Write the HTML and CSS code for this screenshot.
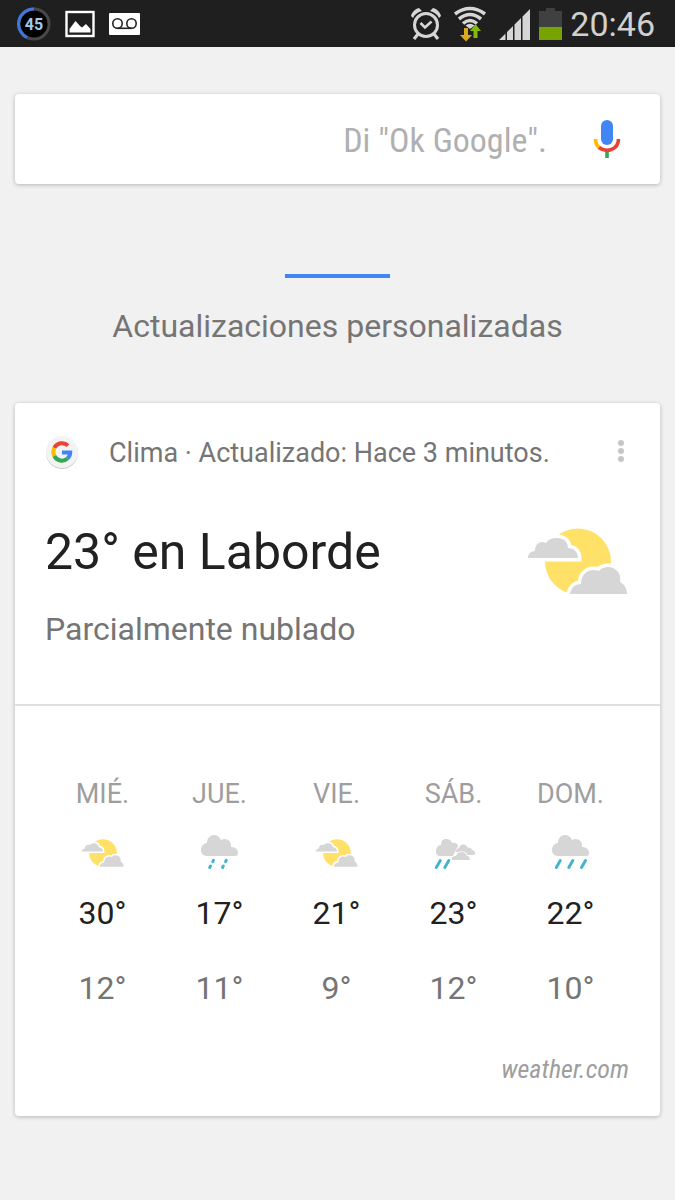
FILE: index.html
```html
<!DOCTYPE html>
<html lang="es">
<head>
    <meta charset="UTF-8">
    <meta name="viewport" content="width=device-width, initial-scale=1.0">
    <title>Google Now</title>
    <link rel="stylesheet" href="styles.css">
</head>
<body>
    <!-- Shared weather icons -->
    <svg class="hidden" aria-hidden="true">
        <symbol id="partly-cloudy" viewBox="0 0 100 67">
            <circle cx="50" cy="33.5" r="33" fill="#ffe168"/>
            <g fill="#d6d6d6" stroke="#fff" stroke-width="7" paint-order="stroke">
                <path d="M0 30C0 26 3 23 7 23C7 16 12 12 18 15C20 11 25 10 29 10C36 10 40 14 40 20C46 20 50 24 50 30Z"/>
                <path d="M42 66C43 60 47 56 53 56C53 47 59 42 65 42C67 42 69 42 71 43C73 40 77 39 80 39C88 39 94 46 92 54C96 56 99 60 99 66Z"/>
            </g>
        </symbol>
        <symbol id="cloud" viewBox="0 0 42 36">
            <path fill="#d6d6d6" d="M8 22C4 22 2 19 2 16C2 12 5 9 8 9C8 4 11 1 15 1C18 1 21 3 22 6C27 3 33 7 32 13C36 13 39 15 39 19C39 21 38 22 37 22Z"/>
        </symbol>
        <symbol id="drizzle" viewBox="0 0 42 36">
            <use href="#cloud" width="42" height="36"/>
            <g stroke="#46b5cb" stroke-width="3" stroke-linecap="round">
                <path d="M14.5 26.3l-.7 1.3M11.5 32l-.8 1.5M27.3 26.3l-.7 1.3M24.3 32l-.8 1.5"/>
            </g>
        </symbol>
        <symbol id="rain" viewBox="0 0 42 36">
            <use href="#cloud" width="42" height="36"/>
            <path stroke="#46b5cb" stroke-width="3" stroke-linecap="round" d="M10.3 26.5l-4 7M22.8 26.5l-4 7M35.5 26.5l-4 7"/>
        </symbol>
        <symbol id="showers" viewBox="0 0 42 36">
            <path fill="#d6d6d6" d="M7 22C4 22 3 20 3 17C3 14 5 11 8 11C8 7 10 5 13 5C16 5 18 6 19 9C22 8 25 10 25 12L20 22Z"/>
            <path fill="#d6d6d6" d="M23 18C23 15 25 14 26 14C27 11 29 10 31 10.5C33 11 34 12 35 14C37 13 39 15 39 16C41 16 42.500 18 42 19.5C42 21 41 21 40 21H32Z"/>
            <path fill="#d6d6d6" stroke="#fff" stroke-width="1.6" paint-order="stroke" d="M19 26C18 23 21 21.5 23 22C24 19 26 18 28.5 18C31 18 33 19 33.5 21.5C36 22 37 24 37 26Z"/>
            <path stroke="#46b5cb" stroke-width="3" stroke-linecap="round" d="M7.3 26.5l-4 7M15.8 26.5l-4 7"/>
        </symbol>
    </svg>

    <header class="status-bar">
        <div class="status-group">
            <svg width="34" height="34" viewBox="0 0 34 34" role="img" aria-label="45">
                <circle cx="17" cy="17" r="15" fill="#000" stroke="#484848" stroke-width="3"/>
                <path d="M10 30.5A15 15 0 0 1 17 2" fill="none" stroke="#3f78dc" stroke-width="3"/>
                <text class="level-text" x="17" y="23" text-anchor="middle">45</text>
            </svg>
            <svg width="30" height="28" viewBox="0 0 30 28" aria-hidden="true">
                <rect x="1.5" y="2" width="27" height="24" fill="none" stroke="#fff" stroke-width="2.4"/>
                <path d="M4.500 22.5V19L10.5 11L15 16L17 17.5L21 14L25.500 19V22.500Z" fill="#fff"/>
            </svg>
            <svg width="31" height="22" viewBox="0 0 31 22" aria-hidden="true">
                <rect width="31" height="22" rx="1" fill="#fff"/>
                <g fill="none" stroke="#222" stroke-width="1.6">
                    <circle cx="8.5" cy="10.5" r="4.7"/>
                    <circle cx="22.5" cy="10.5" r="4.7"/>
                    <path d="M8.5 15.3H22.5"/>
                </g>
            </svg>
        </div>
        <div class="status-group status-right">
            <div class="status-group connections">
                <svg width="30" height="34" viewBox="0 0 30 34" aria-hidden="true">
                    <g fill="none" stroke="#d6d6d6">
                        <circle cx="15" cy="18" r="11.5" stroke-width="3"/>
                        <path d="M9.5 16L14 20.5L20.5 14.5" stroke-width="2.6"/>
                        <path d="M7 27L3 32M23 27L27 32" stroke-width="3.2"/>
                    </g>
                    <path d="M0 9C1 5 4 2 8 1L11 4C7 5 4 7 2 11ZM30 9C29 5 26 2 22 1L19 4C23 5 26 7 28 11Z" fill="#d6d6d6"/>
                </svg>
                <svg width="34" height="36" viewBox="0 0 34 36" aria-hidden="true">
                    <g fill="none" stroke="#d6d6d6" stroke-width="3.6">
                        <path d="M2 8Q17-3 32 8"/>
                        <path d="M6 13Q17 4 28 13"/>
                        <path d="M10 17.5Q17 11.500 24 17.5"/>
                    </g>
                    <path d="M12.5 19.5Q17 16 21.5 19.5L17 23Z" fill="#d6d6d6"/>
                    <path d="M11 22H15V29H19L13 35.5L7 29H11Z" fill="#d9aa1c"/>
                    <path d="M22.5 18L28 25H24.5V32H20.500V25H17Z" fill="#86b812"/>
                </svg>
                <svg width="32" height="32" viewBox="0 0 32 32" aria-hidden="true">
                    <path d="M0 32L6.5 25.5V32ZM8 32V24L14 18V32ZM15.5 32V16.500L22 10V32ZM23.500 32V8.500L31 1V32Z" fill="#d6d6d6"/>
                </svg>
            </div>
            <svg width="23" height="34" viewBox="0 0 23 34" aria-hidden="true">
                <path d="M0 4H7V1H16V4H23V20H0Z" fill="#404040"/>
                <rect y="20" width="23" height="13" fill="#77a300"/>
            </svg>
            <time class="clock" datetime="20:46">20:46</time>
        </div>
    </header>

    <main class="feed">
        <form class="card search-card">
            <input type="text" class="search-input" placeholder='Di "Ok Google".' aria-label="Buscar">
            <button type="button" class="icon-button" aria-label="Búsqueda por voz">
                <svg width="28" height="38" viewBox="0 0 28 38">
                    <rect x="8" y="0" width="12" height="25" rx="6" fill="#4285f4"/>
                    <path d="M14 30V38" stroke="#34a853" stroke-width="3.6"/>
                    <path d="M2.5 19C2.5 23 4 26 6.5 28" fill="none" stroke="#fbbc05" stroke-width="3.6"/>
                    <path d="M6 27.5C13 33 25.5 30 25.5 19" fill="none" stroke="#ea4335" stroke-width="3.6"/>
                </svg>
            </button>
        </form>

        <div class="updates">
            <div class="updates-bar"></div>
            <h1>Actualizaciones personalizadas</h1>
        </div>

        <section class="card weather-card">
            <div class="card-header">
                <svg width="34" height="34" viewBox="0 0 34 34" aria-hidden="true">
                    <circle cx="17" cy="17" r="16" fill="#ccc"/>
                    <circle cx="17" cy="16" r="16" fill="#f3f3f3"/>
                    <g fill="none" stroke-width="4">
                        <path d="M23 9.7A8.5 8.5 0 0 0 9.3 12" stroke="#ea4335"/>
                        <path d="M9.3 12A8.5 8.5 0 0 0 9.3 20" stroke="#fbbc05"/>
                        <path d="M9.3 20A8.5 8.5 0 0 0 22.5 22.5" stroke="#34a853"/>
                        <path d="M22.5 22.5A8.5 8.5 0 0 0 25.2 16.5H17" stroke="#4285f4"/>
                    </g>
                </svg>
                <span class="card-source">Clima · Actualizado: Hace 3 minutos.</span>
                <button type="button" class="icon-button" aria-label="Más opciones">
                    <svg width="6" height="28" viewBox="0 0 6 28" fill="#c6c6c6">
                        <circle cx="3" cy="4" r="3"/>
                        <circle cx="3" cy="12" r="3"/>
                        <circle cx="3" cy="20" r="3"/>
                    </svg>
                </button>
            </div>

            <div class="current">
                <div>
                    <h2>23° en Laborde</h2>
                    <p>Parcialmente nublado</p>
                </div>
                <svg width="100" height="67"><use href="#partly-cloudy"/></svg>
            </div>

            <div class="forecast">
                <table>
                    <thead>
                        <tr>
                            <th scope="col">MIÉ.</th>
                            <th scope="col">JUE.</th>
                            <th scope="col">VIE.</th>
                            <th scope="col">SÁB.</th>
                            <th scope="col">DOM.</th>
                        </tr>
                    </thead>
                    <tbody>
                        <tr class="icons">
                            <td><svg width="42" height="36"><use href="#partly-cloudy" y="1"/></svg></td>
                            <td><svg width="42" height="36"><use href="#drizzle"/></svg></td>
                            <td><svg width="42" height="36"><use href="#partly-cloudy" y="1"/></svg></td>
                            <td><svg width="42" height="36"><use href="#showers"/></svg></td>
                            <td><svg width="42" height="36"><use href="#rain"/></svg></td>
                        </tr>
                        <tr class="high">
                            <td>30°</td>
                            <td>17°</td>
                            <td>21°</td>
                            <td>23°</td>
                            <td>22°</td>
                        </tr>
                        <tr class="low">
                            <td>12°</td>
                            <td>11°</td>
                            <td>9°</td>
                            <td>12°</td>
                            <td>10°</td>
                        </tr>
                    </tbody>
                </table>
                <a class="provider" href="#">weather.com</a>
            </div>
        </section>
    </main>
</body>
</html>
```
FILE: styles.css
```css
* {
    box-sizing: border-box;
}
body {
    margin: 0;
    min-height: 100vh;
    background-color: #f1f1f1;
    color: #757575;
    font-family: Roboto, "Noto Sans", sans-serif;
}
svg {
    display: block;
    flex-shrink: 0;
}
h1, h2, p {
    margin: 0;
    font-weight: normal;
}
.hidden {
    display: none;
}

/* Status bar */
.status-bar {
    display: flex;
    justify-content: space-between;
    align-items: center;
    height: 47px;
    padding: 0 20px 0 17px;
    background-color: #1f1f1f;
}
.status-group {
    display: flex;
    align-items: center;
    gap: 14px;
}
.status-right {
    gap: 8px;
}
.connections {
    gap: 12px;
}
.level-text {
    fill: #a3c8e8;
    font-size: 16px;
    font-weight: bold;
}
.clock {
    color: #d0d0d0;
    font-size: 34px;
    line-height: 40px;
}

/* Cards */
.feed {
    padding: 47px 15px 84px;
}
.card {
    background-color: #fff;
    border-radius: 4px;
    box-shadow: 0 1px 4px rgba(0, 0, 0, 0.25);
}
.icon-button {
    padding: 0;
    border: none;
    background: none;
    cursor: pointer;
}
.search-card {
    display: flex;
    align-items: center;
    gap: 46px;
    height: 90px;
    padding: 0 39px 0 30px;
}
.search-input {
    flex: 1;
    min-width: 0;
    padding: 2px 0 0;
    border: none;
    outline: none;
    background: none;
    color: #212121;
    font-family: "Roboto Condensed", "Liberation Sans Narrow", Roboto, sans-serif;
    font-size: 34px;
    line-height: 48px;
    text-align: right;
}
.search-input::placeholder {
    color: #b0b0b0;
    opacity: 1;
}

/* Updates heading */
.updates {
    display: flex;
    flex-direction: column;
    align-items: center;
    gap: 28px;
    padding: 90px 0 56px;
}
.updates-bar {
    width: 105px;
    height: 4px;
    background-color: #4285f4;
}
.updates h1 {
    font-size: 32px;
    line-height: 41px;
}

/* Weather card */
.card-header {
    display: flex;
    align-items: center;
    gap: 30px;
    padding: 32px 36px 0 30px;
}
.card-source {
    flex: 1;
    font-size: 27px;
    line-height: 36px;
}
.current {
    display: flex;
    justify-content: space-between;
    align-items: flex-start;
    padding: 47px 32px 55px 30px;
    border-bottom: 2px solid #e0e0e0;
}
.current svg {
    margin-top: 10px;
}
.current h2 {
    color: #212121;
    font-size: 50px;
    line-height: 68px;
}
.current p {
    margin-top: 23px;
    font-size: 32px;
    line-height: 40px;
}
.forecast {
    display: flex;
    flex-direction: column;
    padding: 68px 31px 27px 29px;
}
.forecast table {
    width: 100%;
    table-layout: fixed;
    border-collapse: collapse;
    text-align: center;
}
.forecast th, .forecast td {
    padding: 0;
}
.forecast th {
    color: #9e9e9e;
    font-size: 27px;
    font-weight: normal;
    line-height: 40px;
}
.icons td {
    padding: 20px 0 23px;
}
.icons svg {
    margin: 0 auto;
}
.high, .low {
    font-size: 32px;
    line-height: 40px;
}
.high {
    color: #212121;
}
.forecast .high td {
    padding-bottom: 35px;
}
.provider {
    align-self: flex-end;
    margin-top: 41px;
    color: #9e9e9e;
    font-family: "Roboto Condensed", "Liberation Sans Narrow", Roboto, sans-serif;
    font-size: 26px;
    font-style: italic;
    line-height: 40px;
    text-decoration: none;
}
```
